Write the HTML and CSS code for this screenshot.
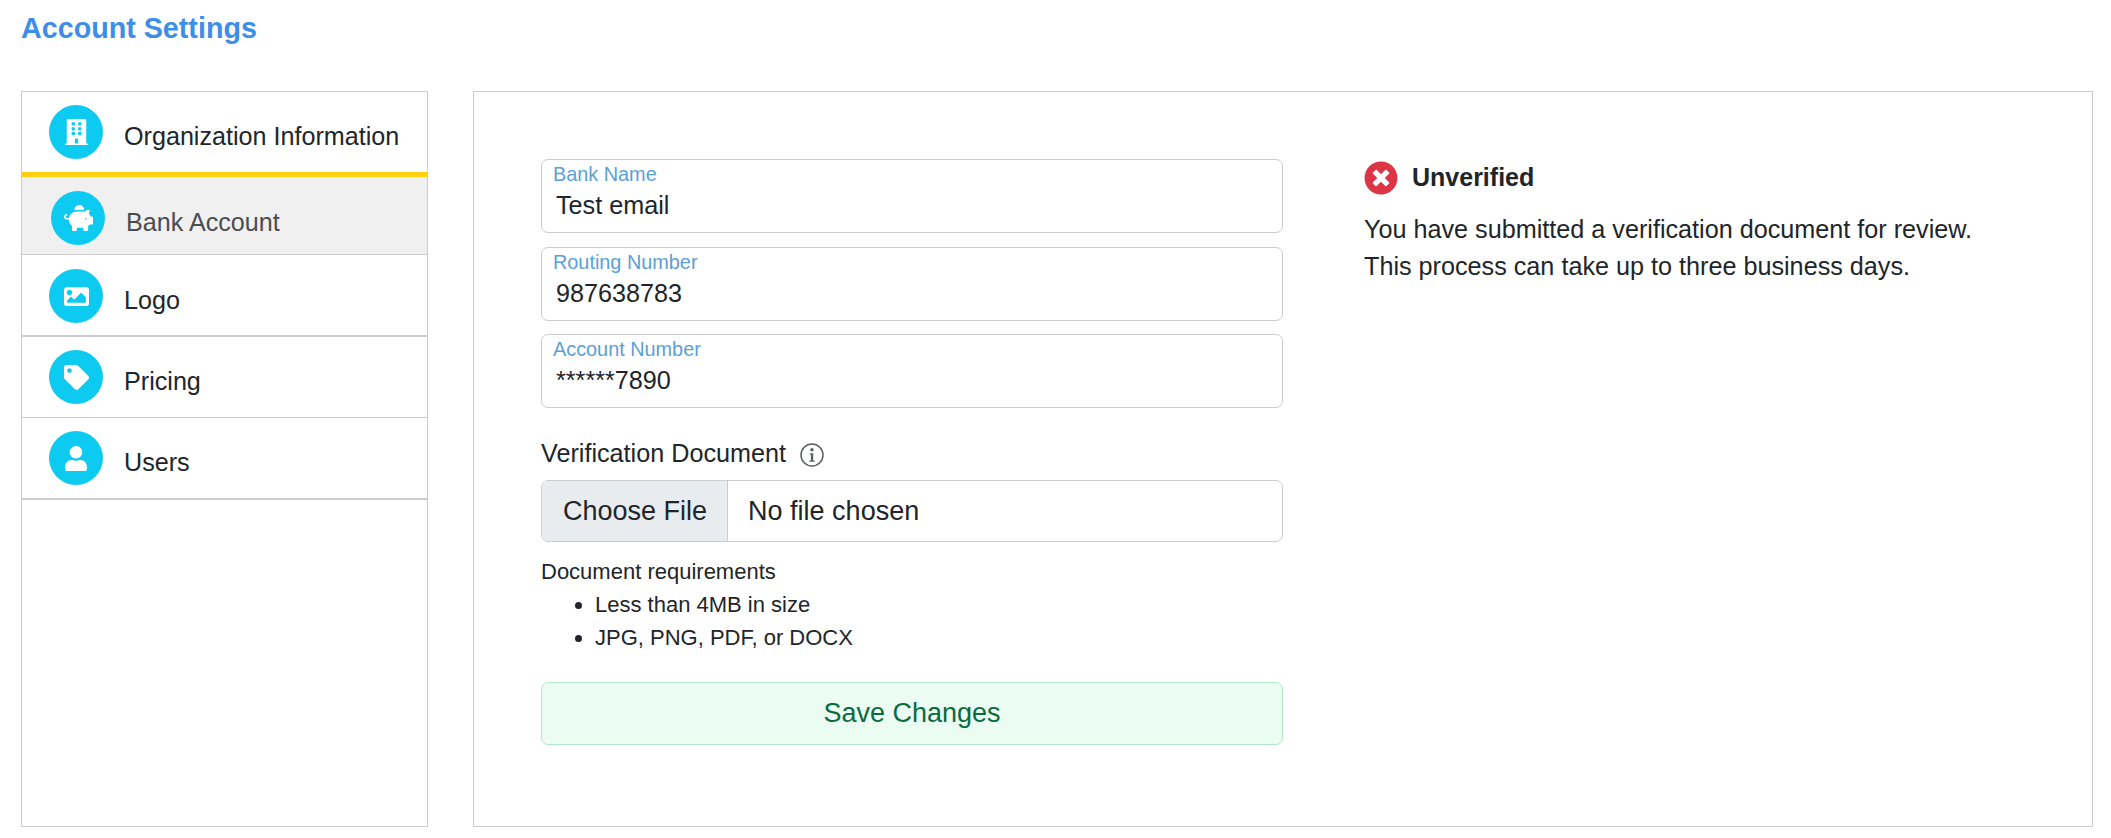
FILE: index.html
```html
<!DOCTYPE html>
<html lang="en">
<head>
<meta charset="utf-8">
<title>Account Settings</title>
<link rel="stylesheet" href="styles.css">
</head>
<body>
<h1 class="page-title">Account Settings</h1>
<div class="layout">
  <nav class="sidebar">
    <a class="nav-item nav-first">
      <span class="nav-icon">
        <svg viewBox="0 0 448 512" class="ico-building"><path d="M436 480h-20V24c0-13.255-10.745-24-24-24H56C42.745 0 32 10.745 32 24v456H12c-6.627 0-12 5.373-12 12v20h448v-20c0-6.627-5.373-12-12-12zM128 76c0-6.627 5.373-12 12-12h40c6.627 0 12 5.373 12 12v40c0 6.627-5.373 12-12 12h-40c-6.627 0-12-5.373-12-12V76zm0 96c0-6.627 5.373-12 12-12h40c6.627 0 12 5.373 12 12v40c0 6.627-5.373 12-12 12h-40c-6.627 0-12-5.373-12-12v-40zm52 148h-40c-6.627 0-12-5.373-12-12v-40c0-6.627 5.373-12 12-12h40c6.627 0 12 5.373 12 12v40c0 6.627-5.373 12-12 12zm76 160h-64v-84c0-6.627 5.373-12 12-12h40c6.627 0 12 5.373 12 12v84zm64-172c0 6.627-5.373 12-12 12h-40c-6.627 0-12-5.373-12-12v-40c0-6.627 5.373-12 12-12h40c6.627 0 12 5.373 12 12v40zm0-96c0 6.627-5.373 12-12 12h-40c-6.627 0-12-5.373-12-12v-40c0-6.627 5.373-12 12-12h40c6.627 0 12 5.373 12 12v40zm0-96c0 6.627-5.373 12-12 12h-40c-6.627 0-12-5.373-12-12V76c0-6.627 5.373-12 12-12h40c6.627 0 12 5.373 12 12v40z"/></svg>
      </span>
      <span class="nav-label">Organization Information</span>
    </a>
    <a class="nav-item nav-active">
      <span class="nav-icon">
        <svg viewBox="0 0 576 512" class="ico-pig"><path d="M560 224h-29.500c-8.800-20-21.600-37.700-37.400-52.500L512 96h-32c-29.400 0-55.400 13.500-73 34.300-7.600-1.100-15.100-2.300-23-2.300H256c-77.400 0-141.900 55-156.800 128H56c-14.800 0-26.500-13.500-23.500-28.800C34.700 215.800 45.400 208 57 208h1c3.300 0 6-2.700 6-6v-20c0-3.300-2.700-6-6-6-28.500 0-53.900 20.400-57.500 48.600C-3.900 258.800 22.700 288 56 288h40c0 52.200 25.400 98.100 64 127.300V496c0 8.800 7.200 16 16 16h64c8.800 0 16-7.200 16-16v-48h128v48c0 8.800 7.200 16 16 16h64c8.800 0 16-7.200 16-16v-80.700c11.800-8.900 22.300-19.400 31.300-31.300H560c8.800 0 16-7.200 16-16V240c0-8.800-7.200-16-16-16zm-128 64c-8.800 0-16-7.200-16-16s7.200-16 16-16 16 7.200 16 16-7.200 16-16 16zM256 96h128c5.400 0 10.700.4 15.900.8 0-.3.100-.5.100-.8 0-53-43-96-96-96s-96 43-96 96c0 2.100.5 4.100.6 6.200 15.200-3.900 31-6.200 47.400-6.200z"/></svg>
      </span>
      <span class="nav-label">Bank Account</span>
    </a>
    <a class="nav-item nav-thick">
      <span class="nav-icon">
        <svg viewBox="0 0 512 512" class="ico-image"><path d="M464 448H48c-26.510 0-48-21.490-48-48V112c0-26.510 21.490-48 48-48h416c26.510 0 48 21.490 48 48v288c0 26.510-21.490 48-48 48zM112 120c-30.928 0-56 25.072-56 56s25.072 56 56 56 56-25.072 56-56-25.072-56-56-56zM64 384h384V272l-87.515-87.515c-4.686-4.686-12.284-4.686-16.971 0L208 320l-55.515-55.515c-4.686-4.686-12.284-4.686-16.971 0L64 336v48z"/></svg>
      </span>
      <span class="nav-label">Logo</span>
    </a>
    <a class="nav-item nav-thin">
      <span class="nav-icon">
        <svg viewBox="0 0 512 512" class="ico-tag"><path d="M0 252.118V48C0 21.490 21.490 0 48 0h204.118a48 48 0 0 1 33.941 14.059l211.882 211.882c18.745 18.745 18.745 49.137 0 67.882L293.823 497.941c-18.745 18.745-49.137 18.745-67.882 0L14.059 286.059A48 48 0 0 1 0 252.118zM112 64c-26.510 0-48 21.490-48 48s21.490 48 48 48 48-21.490 48-48-21.490-48-48-48z"/></svg>
      </span>
      <span class="nav-label">Pricing</span>
    </a>
    <a class="nav-item nav-thick">
      <span class="nav-icon">
        <svg viewBox="0 0 448 512" class="ico-user"><path d="M224 256c70.700 0 128-57.300 128-128S294.700 0 224 0 96 57.300 96 128s57.300 128 128 128zm89.600 32h-16.700c-22.200 10.200-46.900 16-72.900 16s-50.600-5.800-72.900-16h-16.700C60.200 288 0 348.200 0 422.400V464c0 26.500 21.500 48 48 48h352c26.500 0 48-21.500 48-48v-41.600c0-74.200-60.200-134.400-134.400-134.400z"/></svg>
      </span>
      <span class="nav-label">Users</span>
    </a>
  </nav>
  <main class="panel">
    <form class="form-col">
      <label class="field">
        <span class="field-label">Bank Name</span>
        <input class="field-input" type="text" value="Test email">
      </label>
      <label class="field">
        <span class="field-label">Routing Number</span>
        <input class="field-input" type="text" value="987638783">
      </label>
      <label class="field">
        <span class="field-label">Account Number</span>
        <input class="field-input" type="text" value="******7890">
      </label>
      <div class="doc-label">
        <span>Verification Document</span>
        <svg class="info-icon" viewBox="0 0 24 24"><circle cx="12" cy="12" r="11" fill="none" stroke="#5c5f62" stroke-width="1.500"/><circle cx="12" cy="6.800" r="1.700" fill="#5c5f62"/><path d="M9.800 10.200h3.400v7.200h1.400v1.400H9.400v-1.400h1.500v-5.800H9.800z" fill="#5c5f62"/></svg>
      </div>
      <input class="file-input" type="file">
      <div class="requirements">
        <div>Document requirements</div>
        <ul class="req-list">
          <li>Less than 4MB in size</li>
          <li>JPG, PNG, PDF, or DOCX</li>
        </ul>
      </div>
      <button class="save-btn" type="button">Save Changes</button>
    </form>
    <aside class="status">
      <div class="status-head">
        <svg class="status-icon" viewBox="0 0 512 512"><path fill="#dc3545" d="M256 8C119 8 8 119 8 256s111 248 248 248 248-111 248-248S393 8 256 8zm121.600 313.100c4.700 4.700 4.700 12.300 0 17L338 377.600c-4.700 4.700-12.300 4.700-17 0L256 312l-65.100 65.600c-4.700 4.700-12.300 4.700-17 0L134.400 338c-4.700-4.700-4.700-12.300 0-17l65.600-65-65.600-65.100c-4.700-4.700-4.700-12.300 0-17l39.600-39.600c4.700-4.700 12.300-4.700 17 0l65 65.700 65.100-65.600c4.700-4.700 12.300-4.700 17 0l39.600 39.600c4.700 4.700 4.700 12.300 0 17L312 256l65.600 65.100z"/></svg>
        <strong class="status-title">Unverified</strong>
      </div>
      <p class="status-text">You have submitted a verification document for review.<br>This process can take up to three business days.</p>
    </aside>
  </main>
</div>
</body>
</html>
```

FILE: styles.css
```css
* { box-sizing: border-box; }
html, body { height: 100%; }
body {
  margin: 0;
  padding: 0 18px 11px 21px;
  display: flex;
  flex-direction: column;
  font-family: "Liberation Sans", Arial, sans-serif;
  color: #212529;
  background: #fff;
}
.page-title {
  margin: 0;
  height: 91px;
  padding-top: 12px;
  font-size: 28.700px;
  line-height: 32px;
  font-weight: 700;
  color: #3d8ee8;
}
.layout {
  flex: 1;
  display: flex;
  gap: 45px;
  min-height: 0;
}
.sidebar {
  width: 407px;
  flex: none;
  border: 1px solid #ccc;
}
.nav-item {
  display: flex;
  align-items: flex-start;
  height: 82px;
  padding: 13px 0 0 27px;
  border-bottom: 1px solid #ccc;
  color: #212529;
}
.nav-first { height: 85px; border-bottom: 5px solid #ffd00f; }
.nav-active {
  height: 78px;
  padding: 14px 0 0 29px;
  background: #f0f0f0;
  color: #4a4d50;
}
.nav-thick { height: 82px; border-bottom-width: 2px; padding-top: 14px; }
.nav-thin { height: 81px; padding-top: 13px; }
.nav-thick:last-child { padding-top: 13px; }
.nav-icon {
  flex: none;
  width: 54px;
  height: 54px;
  border-radius: 50%;
  background: #0dcaf0;
  display: flex;
  align-items: center;
  justify-content: center;
}
.nav-icon svg { fill: #fff; display: block; }
.ico-building { width: 23px; height: 26px; }
.ico-pig { width: 29px; height: 26px; }
.ico-image { width: 25px; height: 25px; }
.ico-tag { width: 25px; height: 25px; margin-left: 1px; }
.ico-user { width: 22px; height: 25px; margin-top: 1px; }
.nav-label {
  margin-left: 21px;
  margin-top: 16px;
  font-size: 25.150px;
  line-height: 30px;
}
.panel {
  flex: 1;
  display: flex;
  border: 1px solid #ccc;
  padding: 67px 0 0 67px;
  min-width: 0;
}
.form-col {
  width: 742px;
  flex: none;
  display: flex;
  flex-direction: column;
}
.field {
  display: block;
  height: 74px;
  margin-bottom: 13.500px;
  border: 1px solid #ccc;
  border-radius: 7px;
  padding: 3px 0 0 11px;
}
.field-label {
  display: block;
  font-size: 19.850px;
  line-height: 22px;
  color: #5b9fd8;
}
.field-input {
  display: block;
  width: 100%;
  margin-top: 2px;
  padding: 0 0 0 3px;
  border: 0;
  outline: 0;
  background: transparent;
  font: 25.200px/36px "Liberation Sans", Arial, sans-serif;
  color: #212529;
}
.doc-label {
  display: flex;
  align-items: center;
  gap: 14px;
  height: 36px;
  margin-top: 14px;
  margin-bottom: 8px;
  font-size: 25.200px;
}
.info-icon { width: 24px; height: 24px; margin-top: 2px; }
.file-input {
  display: block;
  width: 100%;
  height: 62px;
  padding: 0;
  border: 1px solid #ccc;
  border-radius: 7px;
  background: #fff;
  overflow: hidden;
  font: 27px/60px "Liberation Sans", Arial, sans-serif;
  color: #212529;
}
.file-input::file-selector-button {
  height: 60px;
  margin: 0 20px 0 0;
  padding: 0 20px 0 21px;
  border: 0;
  border-right: 1px solid #ccc;
  border-radius: 0;
  background: #e9ecef;
  font: inherit;
  color: #212529;
}
.requirements {
  margin-top: 13px;
  font-size: 22px;
  line-height: 33px;
}
.req-list {
  margin: 0;
  padding: 0 0 0 54px;
}
.save-btn {
  width: 100%;
  height: 63px;
  margin-top: 28px;
  border: 1px solid #b4e6cb;
  border-radius: 7px;
  background: #ebfcf3;
  font: 27px "Liberation Sans", Arial, sans-serif;
  color: #0b6b3f;
}
.status {
  margin-left: 81px;
  padding-top: 2px;
}
.status-head {
  display: flex;
  align-items: center;
  gap: 14px;
  height: 33px;
}
.status-icon { width: 34px; height: 34px; flex: none; }
.status-title { font-size: 25px; }
.status-text {
  margin: 17px 0 0;
  font-size: 25.200px;
  line-height: 37px;
}
```
